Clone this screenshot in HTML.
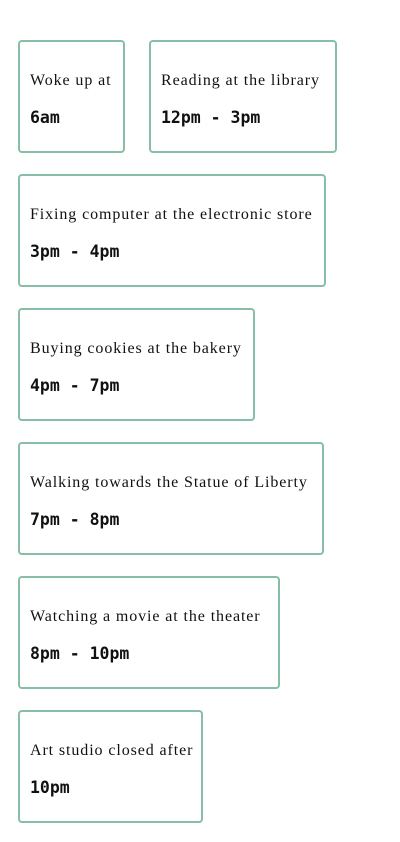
<!DOCTYPE html>
<html><head><meta charset="utf-8"><style>
body{margin:0;background:#fff;width:400px;height:842px;position:relative;overflow:hidden}
.c{position:absolute;box-sizing:border-box;height:113px;border:2px solid #86bfa5;border-radius:4px;padding-left:10px}
.t{position:absolute;left:10px;top:30px;font:16px "Liberation Serif",serif;letter-spacing:0.9px;color:#111;white-space:nowrap}
.m{position:absolute;left:10px;top:66px;font:bold 16.5px "DejaVu Sans Mono",monospace;color:#111;white-space:nowrap}
</style></head><body>
<div class="c" style="left:18px;top:40px;width:107px"><div class="t">Woke up at</div><div class="m">6am</div></div>
<div class="c" style="left:149px;top:40px;width:188px"><div class="t">Reading at the library</div><div class="m">12pm - 3pm</div></div>
<div class="c" style="left:18px;top:174px;width:308px"><div class="t">Fixing computer at the electronic store</div><div class="m">3pm - 4pm</div></div>
<div class="c" style="left:18px;top:308px;width:237px"><div class="t">Buying cookies at the bakery</div><div class="m">4pm - 7pm</div></div>
<div class="c" style="left:18px;top:442px;width:306px"><div class="t">Walking towards the Statue of Liberty</div><div class="m">7pm - 8pm</div></div>
<div class="c" style="left:18px;top:576px;width:262px"><div class="t">Watching a movie at the theater</div><div class="m">8pm - 10pm</div></div>
<div class="c" style="left:18px;top:710px;width:185px"><div class="t">Art studio closed after</div><div class="m">10pm</div></div>
</body></html>
